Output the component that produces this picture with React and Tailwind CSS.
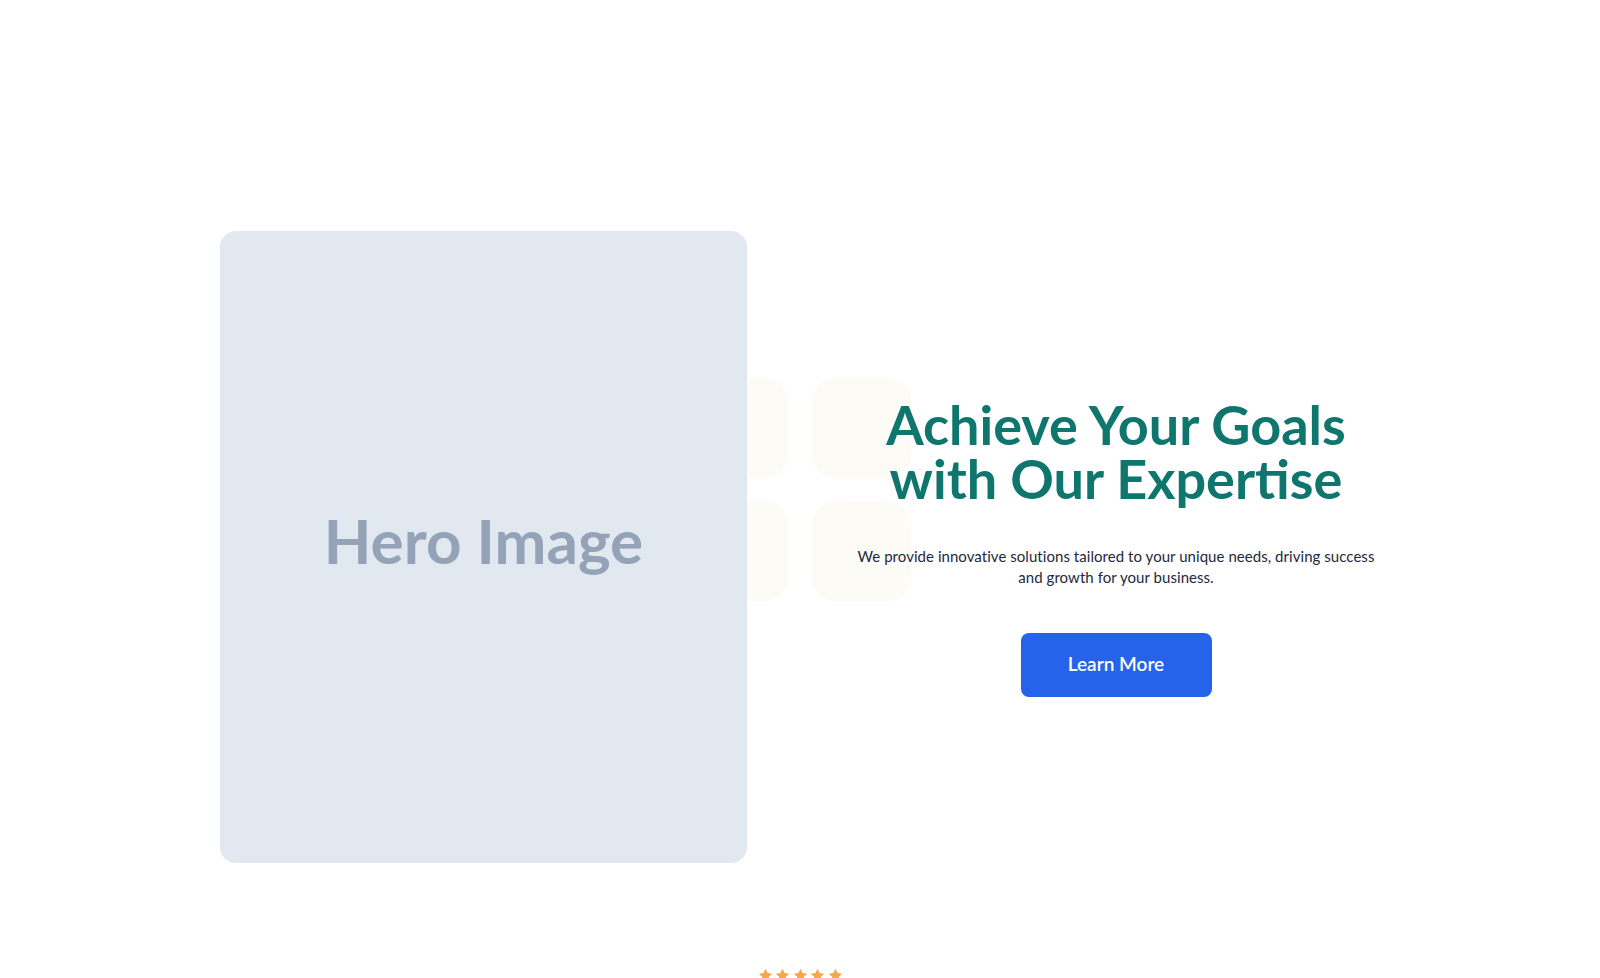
import React from "react";

function Star() {
  return (
    <svg width="17" height="17" viewBox="0 0 24 24" className="shrink-0">
      <path
        d="M12 2.5l2.9 6.1 6.6.8-4.9 4.6 1.3 6.6L12 17.3l-5.9 3.3 1.3-6.6-4.9-4.6 6.6-.8z"
        fill="#f3a94b"
      />
    </svg>
  );
}

export default function App() {
  return (
    <div className="min-h-screen bg-white overflow-hidden" style={{ fontFamily: "Lato, 'Noto Sans', sans-serif" }}>
      <section className="relative pt-[231px] pb-[104px]">
        <div className="absolute left-1/2 top-[378px] -translate-x-1/2 grid grid-cols-2 gap-[23px] z-0">
          <div className="w-[100px] h-[100px] rounded-[24px] bg-[#fcfbf5]" />
          <div className="w-[100px] h-[100px] rounded-[24px] bg-[#fcfbf5]" />
          <div className="w-[100px] h-[100px] rounded-[24px] bg-[#fcfbf5]" />
          <div className="w-[100px] h-[100px] rounded-[24px] bg-[#fcfbf5]" />
        </div>
        <div className="relative z-10 mx-auto w-[1160px] grid grid-cols-[527px_1fr] gap-[99px] items-center">
          <div className="h-[632px] rounded-2xl bg-[#e2e8f0] flex items-center justify-center">
            <span className="text-[62px] font-bold text-[#94a3b8] pb-[14px]" style={{ fontFamily: "Lato, sans-serif" }}>
              Hero Image
            </span>
          </div>
          <div className="flex flex-col items-center text-center">
            <h1 className="flex flex-col font-bold text-[#0f766e] tracking-[0px]" style={{ fontFamily: "Lato, sans-serif" }}>
              <span className="text-[54px] leading-[54px]">Achieve Your Goals</span>
              <span className="text-[54px] leading-[54px]">with Our Expertise</span>
            </h1>
            <p className="mt-[40px] w-[540px] text-[15px] leading-[21px] tracking-[0.05px] text-[#1e293b]">
              We provide innovative solutions tailored to your unique needs, driving success and growth for your business.
            </p>
            <button className="mt-[45px] w-[191px] h-[64px] rounded-lg bg-[#2563eb] text-white text-[19px] font-semibold">
              Learn More
            </button>
          </div>
        </div>
      </section>
      <section className="flex justify-center">
        <div className="flex gap-[0.5px]">
          <Star />
          <Star />
          <Star />
          <Star />
          <Star />
        </div>
      </section>
    </div>
  );
}
